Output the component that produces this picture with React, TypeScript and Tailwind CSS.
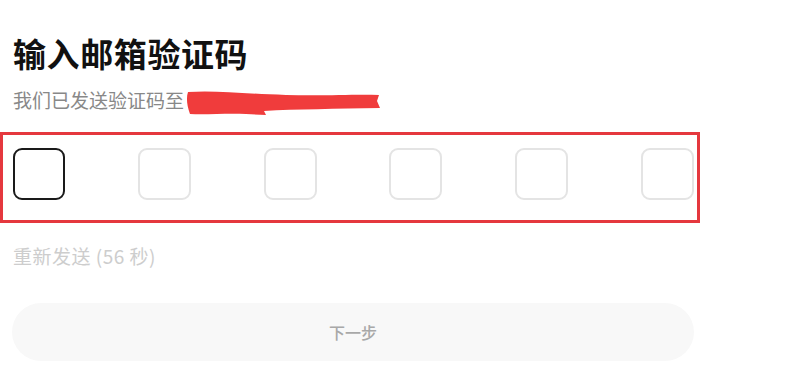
import React from "react";

export default function App() {
  const font = { fontFamily: '"Noto Sans CJK SC", "Noto Sans", sans-serif' };
  return (
    <div className="w-[800px] h-[372px] bg-white overflow-hidden" style={font}>
      <div className="pl-[13px] pt-[33px]">
        <h1 className="text-[33px] leading-[40px] font-bold text-[#111] tracking-[0.6px]">输入邮箱验证码</h1>
        <div className="mt-[14px] flex items-center h-[26px]">
          <span className="text-[19px] leading-[26px] text-[#888]">我们已发送验证码至</span>
          <svg width="196" height="30" viewBox="0 0 196 30" className="ml-[2px] mt-[6px]">
            <path
              d="M2 4 C30 2 60 6 100 7 C140 8 170 6 193 7 L191 13 L194 20 C150 21 110 21 78 23 L80 27 L60 26 C40 25 20 27 4 26 C1 18 0 10 2 4 Z"
              fill="#f03c3c"
            />
          </svg>
        </div>
      </div>
      <div className="mt-[19px] w-[700px] border-[3px] border-[#e5383e] pl-[10px] pr-[3px] pt-[13px] pb-[20px] flex justify-between">
        <div className="w-[52px] h-[52px] rounded-[9px] border-2 border-[#1a1a1a]" />
        <div className="w-[53px] h-[52px] rounded-[9px] border-2 border-[#e4e4e4]" />
        <div className="w-[53px] h-[52px] rounded-[9px] border-2 border-[#e4e4e4]" />
        <div className="w-[53px] h-[52px] rounded-[9px] border-2 border-[#e4e4e4]" />
        <div className="w-[53px] h-[52px] rounded-[9px] border-2 border-[#e4e4e4]" />
        <div className="w-[53px] h-[52px] rounded-[9px] border-2 border-[#e4e4e4]" />
      </div>
      <div className="pl-[13px] mt-[20px] text-[19px] leading-[26px] text-[#cdcdcd] tracking-[0.5px]">重新发送 (56 秒)</div>
      <div className="ml-[12px] mt-[34px] w-[682px] h-[58px] rounded-full bg-[#f8f8f8] flex items-center justify-center">
        <span className="text-[16px] font-medium text-[#a8a8a8]">下一步</span>
      </div>
    </div>
  );
}
